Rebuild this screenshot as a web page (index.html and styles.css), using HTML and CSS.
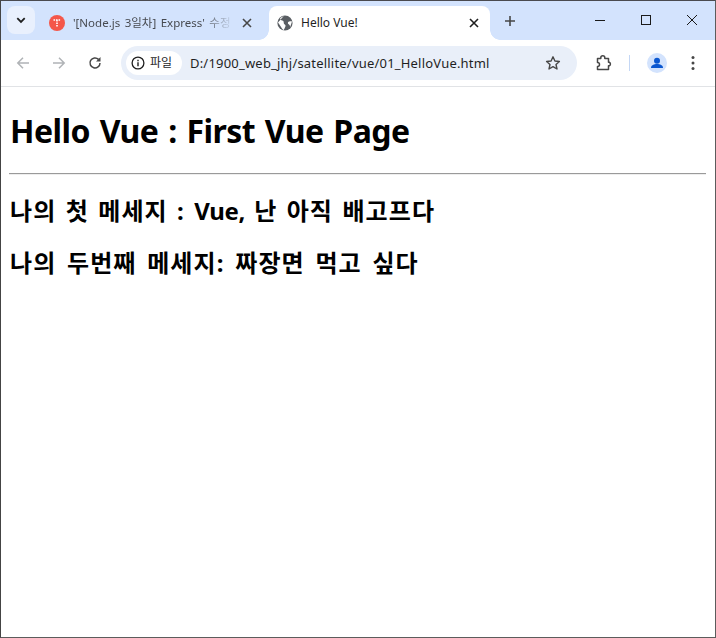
FILE: index.html
```html
<!DOCTYPE html>
<html lang="ko">
<head>
<meta charset="utf-8">
<title>Hello Vue!</title>
<link rel="stylesheet" href="styles.css">
</head>
<body>
<div class="window">
  <div class="tabstrip">
    <button class="tabsearch"><svg width="12" height="12" viewBox="0 0 12 12"><path d="M2.3 4.2 6 7.9l3.7-3.7" fill="none" stroke="#1f1f1f" stroke-width="1.8"/></svg></button>
    <div class="tab inactive">
      <svg class="favicon" width="16" height="16" viewBox="0 0 16 16"><circle cx="8" cy="8" r="8" fill="#f4574a"/><path d="M4.5 5h7M8 5v7" stroke="#fff" stroke-width="1.6" stroke-dasharray="1.6 .9" fill="none"/></svg>
      <span class="tabtitle faded">'[Node.js 3일차] Express' 수정</span>
      <svg class="tabclose" width="10" height="10" viewBox="0 0 10 10"><path d="M1 1l8 8M9 1 1 9" stroke="#474747" stroke-width="1.6"/></svg>
    </div>
    <div class="tab active">
      <svg class="favicon" width="16" height="16" viewBox="0 0 16 16"><circle cx="8" cy="8" r="7.6" fill="#5a5e63"/><path d="M7 .8C5.5 2 4 2.3 3 3.5 3.5 5 5 5.5 6.3 6c.7 1 .2 2 .8 3 1 .7 1.7 1 1.4 2.3L7.3 14l-1 1.2C4 12 3.500 11 1 7.500M15 6.500c-1.500-.5-3-.5-3.800.5-.7 1-.2 2 .8 2.600.7.500 1 1.500 1.200 2.400" fill="#fff" stroke="none"/></svg>
      <span class="tabtitle">Hello Vue!</span>
      <svg class="tabclose" width="10" height="10" viewBox="0 0 10 10"><path d="M1 1l8 8M9 1 1 9" stroke="#1f1f1f" stroke-width="1.6"/></svg>
    </div>
    <button class="newtab"><svg width="12" height="12" viewBox="0 0 12 12"><path d="M6 1v10M1 6h10" stroke="#474747" stroke-width="1.6"/></svg></button>
    <div class="wincontrols">
      <span class="winbtn"><svg width="10" height="10" viewBox="0 0 10 10"><path d="M0 5.500h10" stroke="#1a1a1a"/></svg></span>
      <span class="winbtn"><svg width="10" height="10" viewBox="0 0 10 10"><rect x=".5" y=".5" width="9" height="9" fill="none" stroke="#1a1a1a"/></svg></span>
      <span class="winbtn"><svg width="10" height="10" viewBox="0 0 10 10"><path d="M0 0l10 10M10 0 0 10" stroke="#1a1a1a"/></svg></span>
    </div>
  </div>
  <div class="toolbar">
    <button class="navbtn"><svg width="16" height="16" viewBox="0 0 16 16"><path d="M14 8H3M8 2.800 2.800 8 8 13.200" fill="none" stroke="#b0b3b6" stroke-width="1.500"/></svg></button>
    <button class="navbtn"><svg width="16" height="16" viewBox="0 0 16 16"><path d="M2 8h11M8 2.800 13.200 8 8 13.200" fill="none" stroke="#b0b3b6" stroke-width="1.500"/></svg></button>
    <button class="navbtn"><svg width="16" height="16" viewBox="0 0 16 16"><path d="M13 8a5 5 0 1 1-1.500-3.600" fill="none" stroke="#474747" stroke-width="1.500"/><path d="M13.500 2v4.500H9z" fill="#474747"/></svg></button>
    <div class="omnibox">
      <span class="chip">
        <svg width="14" height="14" viewBox="0 0 14 14"><circle cx="7" cy="7" r="5.900" fill="none" stroke="#1f1f1f" stroke-width="1.300"/><path d="M7 6.200v4M7 3.800v1.400" stroke="#1f1f1f" stroke-width="1.400"/></svg>
        <span class="chiplabel">파일</span>
      </span>
      <span class="url">D:/1900_web_jhj/satellite/vue/01_HelloVue.html</span>
      <svg class="star" width="16" height="16" viewBox="0 0 16 16"><path d="M8 1.800l1.900 4.200 4.500.5-3.400 3 1 4.500L8 11.700l-4 2.300 1-4.500-3.400-3 4.500-.5z" fill="none" stroke="#474747" stroke-width="1.400" stroke-linejoin="round"/></svg>
    </div>
    <div class="tbactions">
      <svg class="ext" width="18" height="18" viewBox="0 0 18 18"><path d="M2.500 4.500h3.300V3.700a2 2 0 0 1 4 0v.8h3.700v3.700h.8a2 2 0 0 1 0 3.600h-.8v3.700H2.500v-3a2 2 0 0 0 0-4z" fill="none" stroke="#474747" stroke-width="1.500" stroke-linejoin="round"/></svg>
      <span class="sep"></span>
      <span class="avatar"><svg width="20" height="20" viewBox="0 0 20 20"><circle cx="10" cy="10" r="10" fill="#d3e3fd"/><circle cx="10" cy="7.800" r="3" fill="#0b57d0"/><path d="M4 15c0-3 3-4 6-4s6 1 6 4z" fill="#0b57d0"/></svg></span>
      <svg class="menu" width="4" height="16" viewBox="0 0 4 16"><circle cx="2" cy="2.500" r="1.500" fill="#474747"/><circle cx="2" cy="8" r="1.500" fill="#474747"/><circle cx="2" cy="13.500" r="1.500" fill="#474747"/></svg>
    </div>
  </div>
  <main class="page">
    <h1>Hello Vue : First Vue Page</h1>
    <hr>
    <h2 class="msg-first">나의 첫 메세지 : <span class="latin">Vue,</span> 난 아직 배고프다</h2>
    <h2 class="msg-second">나의 두번째 메세지: 짜장면 먹고 싶다</h2>
  </main>
</div>
</body>
</html>
```
FILE: styles.css
```css
* { box-sizing: border-box; }
html, body { margin: 0; height: 100%; background: #fff; }
body { font-family: "Noto Sans", "Noto Sans CJK KR", sans-serif; overflow: hidden; }
button { border: 0; padding: 0; background: none; display: flex; align-items: center; justify-content: center; }

.window { width: 716px; height: 638px; display: flex; flex-direction: column; border: 1px solid #5c5c5c; border-top-color: #4a4a4f; border-left-color: #444; }

.tabstrip { height: 39px; background: #d3e3fd; display: flex; align-items: flex-end; flex: none; }
.tabsearch { width: 28px; height: 28px; margin: 0 0 6px 6px; background: #e9f0fd; border-radius: 8px; }
.tab { height: 34px; display: flex; align-items: center; font: 12px "Noto Sans", "Noto Sans CJK KR", sans-serif; position: relative; }
.tab.inactive { width: 221px; margin-left: 6px; padding: 0 10px 0 8px; color: #474a50; font-size: 11.5px; word-spacing: 1.5px; }
.tab.active { width: 221px; background: #fff; border-radius: 8px 8px 0 0; margin-left: 7px; padding: 0 11px 0 8px; color: #1f1f1f; }
.tab.active::before, .tab.active::after { content: ""; position: absolute; bottom: 0; width: 10px; height: 10px; background: radial-gradient(circle at 0 0, #d3e3fd 9.5px, #fff 10px); }
.tab.active::before { left: -10px; }
.tab.active::after { right: -10px; background: radial-gradient(circle at 100% 0, #d3e3fd 9.500px, #fff 10px); }
.favicon { flex: none; }
.tabtitle { margin-left: 8px; flex: 1; white-space: nowrap; overflow: hidden; line-height: 16px; }
.faded { -webkit-mask-image: linear-gradient(90deg, #000 80%, transparent); mask-image: linear-gradient(90deg, #000 80%, transparent); }
.tabclose { flex: none; margin-left: 8px; }
.newtab { width: 28px; height: 28px; margin: 0 0 5px 6px; }
.wincontrols { margin-left: auto; display: flex; align-self: flex-start; }
.winbtn { width: 46px; height: 38px; display: flex; align-items: center; justify-content: center; }

.toolbar { height: 47px; flex: none; background: #fff; border-bottom: 1px solid #e1e3e6; border-radius: 8px 8px 0 0; display: flex; align-items: center; padding: 0 0 1px 8px; position: relative; }
.navbtn { width: 28px; height: 28px; margin-right: 8px; }
.omnibox { width: 456px; height: 34px; margin-left: 4px; background: #e9eff9; border-radius: 17px; display: flex; align-items: center; padding: 0 16px 0 5px; }
.chip { height: 24px; width: 56px; background: #fff; border-radius: 12px; display: flex; align-items: center; gap: 5px; padding-left: 5px; flex: none; }
.chiplabel { font-size: 12px; color: #1f1f1f; line-height: 16px; }
.url { margin-left: 8px; flex: 1; font-size: 13px; letter-spacing: .2px; color: #1f1f1f; white-space: nowrap; }
.star { flex: none; }
.tbactions { display: flex; align-items: center; flex: 1; padding-left: 18px; }
.ext { flex: none; }
.sep { width: 1px; height: 16px; background: #c4d7f5; margin-left: 16px; }
.avatar { width: 20px; height: 20px; margin-left: 17px; display: flex; }
.menu { margin-left: 24px; flex: none; }

.page { flex: 1; padding: 8px 9px; color: #000; }
h1 { font-size: 32px; font-weight: 700; margin: 13px 0 19px; line-height: 46px; letter-spacing: -.55px; word-spacing: 2px; }
hr { margin: 8px 0 8px -1px; border: 0; border-top: 1px solid #9a9a9a; border-bottom: 1px solid #eee; }
h2 { font-size: 24px; font-weight: 700; margin: 20px 0; line-height: 32px; letter-spacing: 1.1px; }
.msg-first { word-spacing: 2px; }
.msg-second { word-spacing: 3.3px; }
.latin { letter-spacing: -.4px; }
```
